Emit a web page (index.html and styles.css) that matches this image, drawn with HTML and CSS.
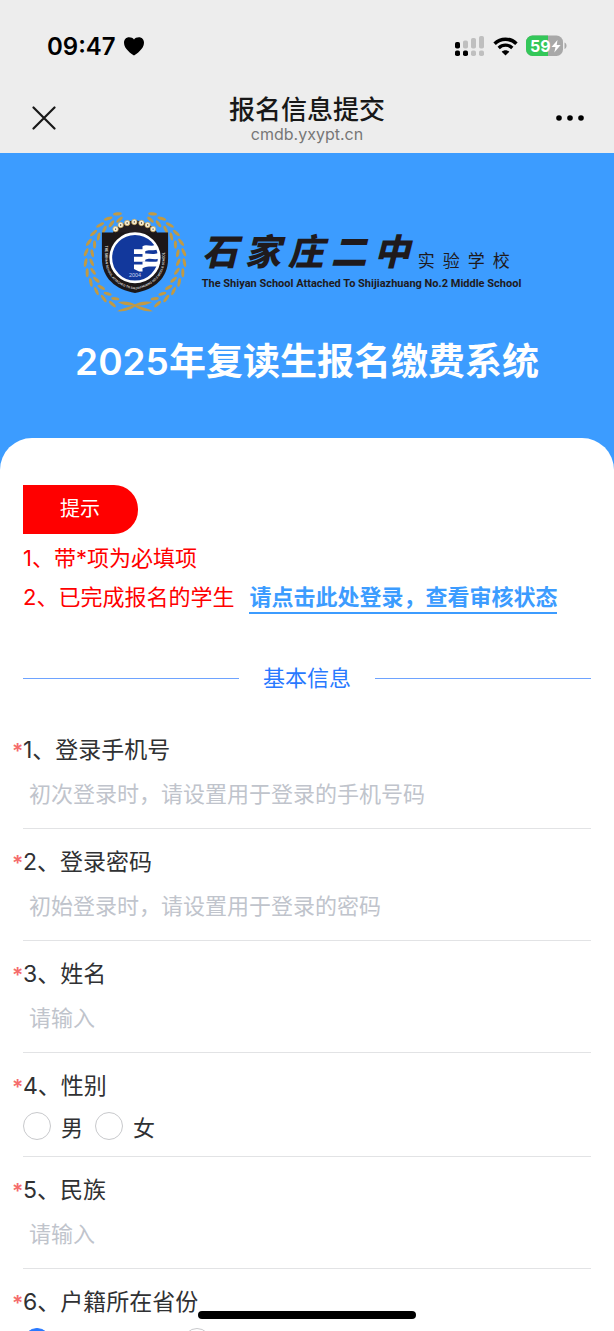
FILE: index.html
```
<!DOCTYPE html>
<html lang="zh-CN">
<head>
  <meta charset="UTF-8" />
  <meta name="viewport" content="width=device-width, initial-scale=1.0"/>
  <title>报名信息提交</title>
  <link rel="stylesheet" href="styles.css">
</head>
<body>
  <div class="screen">
    <header class="topbar">
      <div class="status">
        <div class="status-left">
          <span class="time">09:47</span>
          <svg width="20" height="19" viewBox="0 0 20 19"><path d="M10 18.500C7.500 17 0 12 0 5.800C0 2.400 2.300.300 5 .300C7.300.300 9 1.100 10 2.500C11 1.100 12.700.300 15 .300C17.700.300 20 2.400 20 5.800C20 12 12.500 17 10 18.500Z"/></svg>
        </div>
        <div class="status-right">
          <svg width="30" height="22" viewBox="0 0 30 22">
            <g fill="#000"><rect x="0" y="7" width="5" height="6.500" rx="1.800"/><rect x="0" y="15.500" width="5" height="5.500" rx="1.800"/><rect x="8" y="15.500" width="5" height="5.500" rx="1.800"/></g>
            <g fill="#bfbfbf"><rect x="8" y="5.500" width="5" height="8" rx="1.800"/><rect x="16" y="3" width="5" height="10.500" rx="1.800"/><rect x="24" y="1" width="5" height="12.500" rx="1.800"/><rect x="16" y="15.500" width="5" height="5.500" rx="1.800"/><rect x="24" y="15.500" width="5" height="5.500" rx="1.800"/></g>
          </svg>
          <svg class="wifi" width="25" height="19" viewBox="0 0 25 19">
            <path d="M1.600 6.700C7.700.700 17.300.700 23.400 6.700" fill="none" stroke="#000" stroke-width="3.500"/>
            <path d="M5.700 11C9.600 7.200 15.400 7.200 19.300 11" fill="none" stroke="#000" stroke-width="3.300"/>
            <path d="M12.500 18.500L8.700 14.700C10.800 12.700 14.200 12.700 16.300 14.700Z"/>
          </svg>
          <svg width="41" height="22" viewBox="0 0 41 22">
            <rect x="0" y="0.500" width="37" height="20.500" rx="6.500" fill="#a8a8a8"/>
            <path d="M6.500.500H22V21H6.500A6.500 6.500 0 0 1 0 14.500V7A6.500 6.500 0 0 1 6.500.500Z" fill="#34c759"/>
            <path d="M38.500 7.500C41.200 8.500 41.200 13 38.500 14Z" fill="#a8a8a8"/>
            <text x="4" y="16.500" class="battery-text">59</text>
            <path d="M31.500 5L25.500 12H29.500L28.300 17.500L34.600 10H30.700Z" fill="#fff"/>
          </svg>
        </div>
      </div>
      <div class="nav">
        <button class="nav-btn" type="button" aria-label="关闭">
          <svg width="24" height="24" viewBox="0 0 24 24"><path d="M1.500 1.500L22.500 22.500M22.500 1.500L1.500 22.500" stroke="#181818" stroke-width="2.200" stroke-linecap="round"/></svg>
        </button>
        <div class="nav-title">
          <div class="nav-name">报名信息提交</div>
          <div class="nav-host">cmdb.yxypt.cn</div>
        </div>
        <button class="nav-btn" type="button" aria-label="更多">
          <svg width="28" height="6" viewBox="0 0 28 6"><circle cx="3" cy="3" r="2.800"/><circle cx="14" cy="3" r="2.800"/><circle cx="25" cy="3" r="2.800"/></svg>
        </button>
      </div>
    </header>

    <section class="hero">
      <div class="logo">
        <svg class="emblem" width="104" height="102" viewBox="43 48 304 299">
          <defs>
            <g id="leaf" fill="#c09a45">
              <ellipse cx="193" cy="50" rx="13" ry="4.500" transform="rotate(14 193 50)"/>
              <ellipse cx="193" cy="68" rx="12" ry="4.500" transform="rotate(-22 193 68)"/>
            </g>
            <g id="branch">
              <use href="#leaf" transform="rotate(-20 195 195)"/>
              <use href="#leaf" transform="rotate(-32 195 195)"/>
              <use href="#leaf" transform="rotate(-44 195 195)"/>
              <use href="#leaf" transform="rotate(-56 195 195)"/>
              <use href="#leaf" transform="rotate(-68 195 195)"/>
              <use href="#leaf" transform="rotate(-80 195 195)"/>
              <use href="#leaf" transform="rotate(-92 195 195)"/>
              <use href="#leaf" transform="rotate(-104 195 195)"/>
              <use href="#leaf" transform="rotate(-116 195 195)"/>
              <use href="#leaf" transform="rotate(-128 195 195)"/>
              <use href="#leaf" transform="rotate(-140 195 195)"/>
              <use href="#leaf" transform="rotate(-152 195 195)"/>
              <path d="M145 318C165 314 185 318 203 329C220 334 235 338 248 345C225 347 205 340 192 329C175 328 157 327 145 318Z" fill="#c09a45"/>
            </g>
          </defs>
          <use href="#branch"/>
          <use href="#branch" transform="translate(390 0) scale(-1 1)"/>
          <path d="M130 118Q132 92 195 77Q258 92 260 118Z" fill="#231d20"/>
          <path d="M98 114H292V190C292 248 252 281 195 291C138 281 98 248 98 190Z" fill="#1c1718"/>
          <path id="rim" d="M108 153V190C108 242 144 273 195 281C246 273 282 242 282 190V145" fill="none"/>
          <text class="rim-text"><textPath href="#rim">THE SHIYAN SCHOOL ATTACHED TO SHIJIAZHUANG NO.2 MIDDLE SCHOOL</textPath></text>
          <g fill="#f6efd8" stroke="#c5a252" stroke-width="2">
            <circle cx="138" cy="104" r="8"/><circle cx="153" cy="92" r="8"/><circle cx="172" cy="86" r="8"/><circle cx="193" cy="83" r="8"/><circle cx="214" cy="86" r="8"/><circle cx="232" cy="92" r="8"/><circle cx="248" cy="104" r="8"/>
          </g>
          <g fill="#302518">
            <circle cx="138" cy="104" r="2"/><circle cx="153" cy="92" r="2"/><circle cx="172" cy="86" r="2"/><circle cx="193" cy="83" r="2"/><circle cx="214" cy="86" r="2"/><circle cx="232" cy="92" r="2"/><circle cx="248" cy="104" r="2"/>
          </g>
          <circle cx="195" cy="188" r="71" fill="#12389c" stroke="#fff" stroke-width="8"/>
          <g fill="#fff">
            <path d="M192 163H217V154C231 147 240 158 254 150L261 164C247 169 237 162 225 169V177H192Z"/>
            <path d="M192 185H217V177C232 172 244 181 263 174L265 191C248 195 240 187 225 194V200H192Z"/>
            <path d="M192 208H217V200C232 196 244 203 264 198L260 213C246 216 237 210 217 219V228H207L192 221Z"/>
          </g>
          <text x="195" y="245" class="emblem-year">2004</text>
        </svg>
        <div class="logo-words">
          <div class="logo-cn">
            <div class="brush"><span>石</span><span>家</span><span>庄</span><span>二</span><span>中</span></div>
            <div class="campus"><span>实</span><span>验</span><span>学</span><span>校</span></div>
          </div>
          <div class="logo-en">The Shiyan School Attached To Shijiazhuang No.2 Middle School</div>
        </div>
      </div>
      <h1>2025年复读生报名缴费系统</h1>
    </section>

    <form class="card">
      <div class="badge">提示</div>
      <div class="tips">
        <p>1、带*项为必填项</p>
        <p>2、已完成报名的学生<a href="#login">请点击此处登录，查看审核状态</a></p>
      </div>

      <h2 class="divider">基本信息</h2>

      <div class="field">
        <label class="label" for="phone"><span class="star">*</span>1、登录手机号</label>
        <input class="text" type="tel" id="phone" placeholder="初次登录时，请设置用于登录的手机号码" />
      </div>
      <div class="field">
        <label class="label" for="password"><span class="star">*</span>2、登录密码</label>
        <input class="text" type="password" id="password" placeholder="初始登录时，请设置用于登录的密码" />
      </div>
      <div class="field">
        <label class="label" for="name"><span class="star">*</span>3、姓名</label>
        <input class="text" type="text" id="name" placeholder="请输入" />
      </div>
      <div class="field" role="radiogroup" aria-labelledby="gender-label">
        <div class="label" id="gender-label"><span class="star">*</span>4、性别</div>
        <div class="options">
          <label><input type="radio" name="gender" value="m" />男</label>
          <label><input type="radio" name="gender" value="f" />女</label>
        </div>
      </div>
      <div class="field">
        <label class="label" for="nation"><span class="star">*</span>5、民族</label>
        <input class="text" type="text" id="nation" placeholder="请输入" />
      </div>
      <div class="field" role="radiogroup" aria-labelledby="province-label">
        <div class="label" id="province-label"><span class="star">*</span>6、户籍所在省份</div>
        <div class="options wide">
          <label><input type="radio" name="province" value="1" aria-labelledby="province-label" checked /></label>
          <label><input type="radio" name="province" value="2" aria-labelledby="province-label" /></label>
        </div>
      </div>
    </form>

    <div class="home-bar"></div>
  </div>
</body>
</html>
```
FILE: styles.css
```
* {
  box-sizing: border-box;
}
body {
  margin: 0;
  font-family: Inter, "Noto Sans CJK SC", sans-serif;
  background: #fff;
  color: #303133;
}
h1, h2, p {
  margin: 0;
}
.screen {
  position: relative;
  height: 100vh;
  overflow: hidden;
}

/* top bar */
.topbar {
  background: #ededed;
  padding-bottom: 8px;
}
.status {
  display: flex;
  justify-content: space-between;
  align-items: center;
  padding: 30px 47px 0;
  height: 62px;
}
.status-left, .status-right {
  display: flex;
  align-items: center;
  gap: 8px;
}
.time {
  font-size: 24px;
  font-weight: 600;
  color: #000;
}
.battery-text {
  font-size: 16px;
  font-weight: 700;
  fill: #fff;
}
.nav {
  display: flex;
  justify-content: space-between;
  align-items: center;
  height: 83px;
  padding: 28px 24px 0;
}
.nav-btn {
  display: flex;
  align-items: center;
  justify-content: center;
  width: 40px;
  height: 40px;
  padding: 0;
  border: 0;
  background: none;
  color: #181818;
}
.nav-title {
  text-align: center;
}
.nav-name {
  font-size: 26px;
  line-height: 32px;
  font-weight: 500;
  color: #181818;
}
.nav-host {
  font-size: 16px;
  line-height: 16px;
  color: #777;
}

/* hero */
.hero {
  background: #3c9cff;
  padding: 57px 24px 84px;
}
.logo {
  display: flex;
  justify-content: center;
  gap: 15px;
  padding-right: 10px;
  color: #1f1a1c;
}
.emblem-year {
  font: 16px "Liberation Sans", sans-serif;
  fill: #c9d4f2;
  text-anchor: middle;
}
.rim-text {
  font: bold 9px "Liberation Sans", sans-serif;
  fill: #ddd;
}
.logo-words {
  padding-top: 18px;
}
.logo-cn {
  display: flex;
  align-items: center;
  gap: 8px;
}
.brush {
  display: flex;
  gap: 7px;
  font-size: 36px;
  line-height: 48px;
  font-weight: 900;
  font-style: italic;
}
.campus {
  display: flex;
  gap: 8px;
  padding-top: 18px;
  font-size: 17px;
  line-height: 20px;
}
.logo-en {
  font-family: Roboto, "Liberation Sans", sans-serif;
  font-size: 11px;
  line-height: 16px;
  font-weight: bold;
  white-space: nowrap;
}
h1 {
  margin-top: 25px;
  margin-bottom: -1px;
  font-size: 37px;
  line-height: 50px;
  font-weight: 600;
  text-align: center;
  color: #fff;
}

/* form */
.card {
  position: relative;
  margin-top: -32px;
  padding: 47px 23px 0;
  border-radius: 32px 32px 0 0;
  background: #fff;
}
.badge {
  width: 115px;
  padding-left: 37px;
  border-radius: 0 24px 24px 0;
  background: #f00;
  color: #fff;
  font-size: 20px;
  line-height: 49px;
}
.tips {
  margin-top: 5px;
  font-size: 22px;
  line-height: 39px;
  color: #f00;
}
.tips a {
  margin-left: 15px;
  padding-bottom: 2px;
  border-bottom: 2px solid #3c9cff;
  color: #3c9cff;
  font-weight: 700;
  text-decoration: none;
}
.divider {
  display: flex;
  align-items: center;
  gap: 24px;
  margin: 45px 0 23px;
  font-size: 22px;
  line-height: 32px;
  font-weight: 400;
  color: #2979ff;
}
.divider::before, .divider::after {
  content: "";
  flex: 1;
  height: 1px;
  background: #6ea3ff;
}
.field {
  padding: 15px 0 8px;
  border-bottom: 1px solid #e2e3e5;
}
.label {
  display: flex;
  height: 36px;
  margin-left: -11px;
  font-size: 23px;
  line-height: 36px;
}
.star {
  width: 11px;
  line-height: 40px;
  font-size: 21px;
  font-weight: 600;
  color: #f56c6c;
}
.text {
  display: block;
  width: 100%;
  height: 52px;
  padding: 0 6px;
  border: 0;
  outline: 0;
  background: none;
  font: inherit;
  font-size: 22px;
  color: #303133;
}
.text::placeholder {
  color: #c0c4cc;
}
.options {
  display: flex;
  gap: 12px;
  height: 44px;
}
.options label {
  display: flex;
  align-items: center;
  gap: 10px;
  font-size: 22px;
}
.options.wide label {
  min-width: 148px;
}
.options input {
  appearance: none;
  width: 28px;
  height: 28px;
  margin: 0;
  border: 1px solid #c8c9cc;
  border-radius: 50%;
}
.options input:checked {
  border-color: #2979ff;
  background: #2979ff;
}

.home-bar {
  position: absolute;
  left: 50%;
  bottom: 12px;
  width: 218px;
  height: 8px;
  margin-left: -109px;
  border-radius: 4px;
  background: #000;
}
```
